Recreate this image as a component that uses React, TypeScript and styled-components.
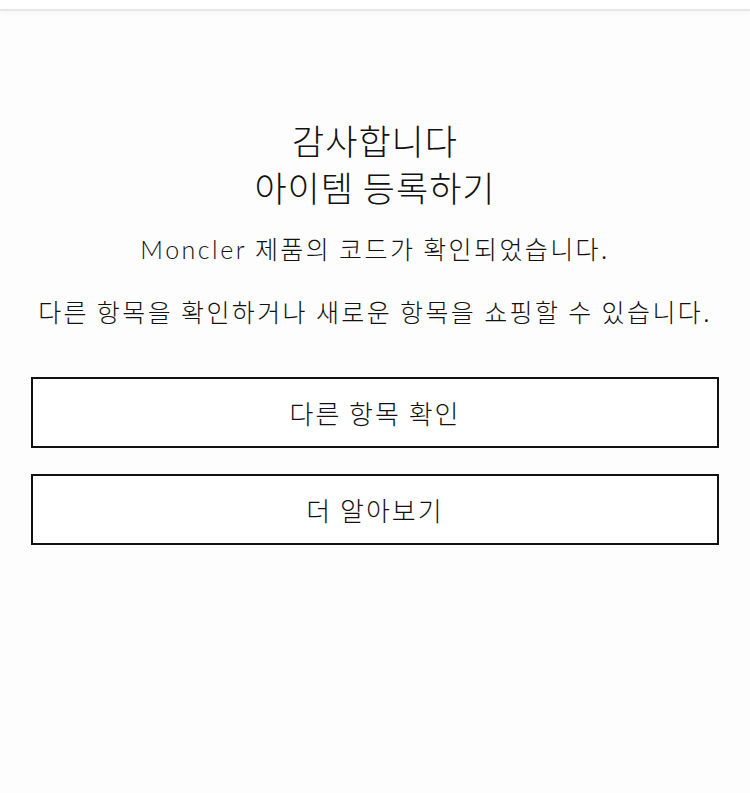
import React from "react";
import styled, { createGlobalStyle } from "styled-components";

const GlobalStyle = createGlobalStyle`
  html, body {
    margin: 0;
    padding: 0;
    background: #fdfdfd;
  }
  body {
    font-family: "Noto Sans CJK KR", "Noto Sans", sans-serif;
    color: #111;
  }
`;

const TopBar = styled.header`
  height: 9px;
  border-bottom: 2px solid #e6e6e8;
  box-shadow: 0 2px 4px rgba(0, 0, 0, 0.03);
  background: #fff;
`;

const Page = styled.main`
  padding: 105px 31px 0;
  text-align: center;
`;

const Title = styled.h1`
  margin: 0;
  font-size: 35px;
  line-height: 47px;
  font-weight: 300;
  letter-spacing: 1px;
`;

const Text = styled.p<{ $gap: number }>`
  margin: ${(p) => p.$gap}px 0 0;
  font-size: 25px;
  line-height: 32px;
  font-weight: 300;
  letter-spacing: 2.4px;
  white-space: nowrap;
`;

const Brand = styled.span`
  font-family: Lato, "Liberation Sans", sans-serif;
  font-weight: 300;
  letter-spacing: 2.5px;
`;

const Actions = styled.div`
  margin-top: 50px;
  display: flex;
  flex-direction: column;
  gap: 26px;
`;

const Button = styled.button`
  height: 71px;
  width: 100%;
  border: 2px solid #111;
  background: #fff;
  font-family: "Noto Sans CJK KR", sans-serif;
  font-size: 26px;
  font-weight: 300;
  color: #111;
  letter-spacing: 2px;
  cursor: pointer;
`;

export default function App() {
  return (
    <>
      <GlobalStyle />
      <TopBar />
      <Page>
        <Title>
          감사합니다
          <br />
          아이템 등록하기
        </Title>
        <Text $gap={22}>
          <Brand>Moncler</Brand> 제품의 코드가 확인되었습니다.
        </Text>
        <Text $gap={30}>다른 항목을 확인하거나 새로운 항목을 쇼핑할 수 있습니다.</Text>
        <Actions>
          <Button>다른 항목 확인</Button>
          <Button>더 알아보기</Button>
        </Actions>
      </Page>
    </>
  );
}
